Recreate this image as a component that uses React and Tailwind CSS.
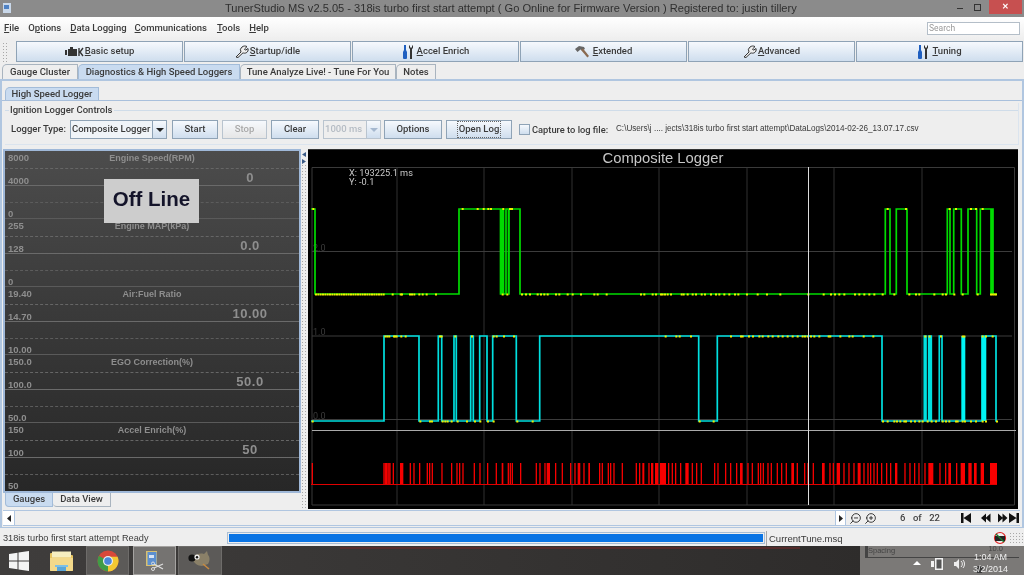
import React from 'react';
import { ZoomIn, ZoomOut } from 'lucide-react';

const range = (a, b, s) => {
  const out = [];
  for (let i = a; i < b; i += s) out.push(i);
  return out;
};
const fromA = (p) => 305 + p / 3;
const fromB = (p) => 660 + p / 3;

// values below were read off the trace, in page pixels
const GREEN_HIGH = 209;
const GREEN_LOW = 294;
const greenEdges = [315, 459, 500.5, 502, 503.5, 506, 508.5, 509, 520, 885.3, 890, 896.3, 907, 947.3, 950, 953.7, 961.3, 968, 976.7, 980.3, 991, 992, 993, 997];
const CYAN_HIGH = 336;
const CYAN_LOW = 421;
const cyanEdges = [384, 419, 438.3, 441.7, 454, 456.3, 470.7, 473.3, 479.7, 487, 492.7, 516.3, 539.7, 698.7, 717.3, 882, 924.3, 926, 928.7, 929.5, 930, 931.3, 939.3, 942, 982, 996, 997];

const greenLowDots = [
  ...range(30, 240, 7), 260, 284, 288, 312, 318, 325, 340, 350, 362, 390, 590, 604, 648, 660, 672, 695, 705, 715, 725, 750, 760, 785, 800, 825, 865, 875, 902, 1005, 1015, 1040, 1050, 1065,
].map(fromA).concat(
  [5, 12, 20, 30, 62, 68, 80, 95, 105, 122, 132, 150, 165, 175, 190, 205, 222, 232, 258, 290, 318, 358, 442, 488, 510, 522, 535, 550, 582, 595, 610, 625, 640, 665, 700, 745, 765, 775, 820, 845, 855, 880, 905, 950, 990, 995, 1000, 1005].map(fromB)
);
const greenHighDots = [22, 470, 515, 533, 547, 555, 592, 612, 618].map(fromA).concat([680, 735, 866, 885, 930, 945, 965].map(fromB));
const cyanHighDots = [238, 244, 250, 264, 268, 272, 286, 299, 402, 407, 448, 498, 563, 572, 594, 624].map(fromA).concat(
  [14, 46, 56, 90, 210, 240, 245, 264, 276, 295, 305, 322, 335, 352, 365, 380, 395, 410, 425, 432, 440, 450, 460, 475, 503, 508, 538, 565, 575, 608, 637, 793, 806, 840, 905, 910, 965, 975, 995].map(fromB)
);
const cyanLowDots = [20, 343, 372, 378, 410, 418, 425, 437, 455, 483, 507, 523, 546, 563, 634, 680].map(fromA).concat(
  [116, 158, 666, 680, 700, 708, 718, 730, 735, 750, 762, 775, 785, 800, 812, 825, 845, 855, 865, 885, 890, 905, 912, 930, 945, 965, 975, 1008].map(fromB)
);

const redA = [20, 235, 239, 243, 247, 250, 253, 263, [285, 295], 314, 325, [342, 346], 365, 372, 380, 409, 438, 454, 462, 472, 506, 523, 546, 572, [590, 595], 608, 614, 620, 645, 692, 703, 718, [725, 735], 750, 770, 795, 808, 818, 822, 835, [850, 855], 882, 890, 908, 915, 925, 950, 992, 1002, [1012, 1018], 1030, [1038, 1045], [1050, 1060], [1065, 1078]];
const redB = [[3, 18], 24, 35, 45, 60, [76, 86], 95, 108, 122, 162, 172, 195, 210, 228, [240, 248], 262, 275, 293, 300, 308, 322, 332, 350, 363, 377, [394, 402], 410, 432, 442, 458, [486, 494], 508, 518, [530, 540], 550, 565, 580, [593, 602], 610, 622, 630, 640, 650, 663, 678, 690, [705, 712], 733, 748, 762, 775, 793, [805, 820], 838, 855, [865, 873], 888, [902, 915], [925, 935], [942, 950], [962, 972], [990, 1011]];

const stepPath = (edges, first, second, startX) => {
  let level = first;
  let d = `M${startX} ${first}`;
  edges.forEach((x, i) => {
    d += `H${x}`;
    if (i < edges.length - 1) {
      level = level === first ? second : first;
      d += `V${level}`;
    }
  });
  return d;
};

function Spikes({ items, map }) {
  return items.map((s, i) => {
    const a = map(Array.isArray(s) ? s[0] : s);
    const b = Array.isArray(s) ? map(s[1]) : a + 1.3;
    return <rect key={i} x={a} y={463} width={b - a} height={21.5} fill="#f80000" />;
  });
}

function Dots({ xs, y, w = 2 }) {
  return xs.map((x, i) => <rect key={i} x={x} y={y} width={w} height={2} fill="#f0f000" />);
}

function LoggerChart() {
  const vLines = [397, 484, 572, 659, 747, 834, 922];
  return (
    <svg width="710" height="342" viewBox="308 167 710 342" className="block">
      {vLines.map((x) => (
        <line key={x} x1={x} x2={x} y1={167} y2={505} stroke="#303030" />
      ))}
      <path d="M312 505V167.500H1014.500V505H312" fill="none" stroke="#3a3a3a" />
      <line x1={312} x2={1012} y1={251.5} y2={251.5} stroke="#3c3c3c" />
      <line x1={312} x2={1012} y1={336} y2={336} stroke="#3c3c3c" />
      <line x1={312} x2={1012} y1={419.5} y2={419.5} stroke="#3c3c3c" />
      <text x={313} y={251} fontSize="9" fill="#3a3a3a">2.0</text>
      <text x={313} y={335} fontSize="9" fill="#3a3a3a">1.0</text>
      <text x={313} y={419} fontSize="9" fill="#3a3a3a">0.0</text>
      <text x={349} y={176} fontSize="9.2" fill="#c8c8c8">X: 193225.1 ms</text>
      <text x={349} y={185} fontSize="9.2" fill="#c8c8c8">Y: -0.1</text>

      <path d={stepPath(greenEdges, GREEN_HIGH, GREEN_LOW, 311)} fill="none" stroke="#00dc00" strokeWidth="1.7" />
      <Dots xs={greenLowDots} y={293.5} />
      <Dots xs={greenHighDots} y={208} />

      <path d={stepPath(cyanEdges, CYAN_LOW, CYAN_HIGH, 311)} fill="none" stroke="#00e0e0" strokeWidth="1.7" />
      <rect x={961.3} y={336} width={4} height={85} fill="#00f4f4" />
      <rect x={981.7} y={336} width={4.6} height={85} fill="#00f4f4" />
      <Dots xs={cyanHighDots} y={335.5} />
      <Dots xs={cyanLowDots} y={420.5} />

      <line x1={312} x2={1016} y1={430.5} y2={430.5} stroke="#aaaaaa" />
      <Spikes items={redA} map={fromA} />
      <Spikes items={redB} map={fromB} />
      <rect x={311} y={484} width={686} height={1} fill="#e00000" />
      <line x1={808.5} x2={808.5} y1={167} y2={505} stroke="#dcdcdc" />
    </svg>
  );
}

function Gauge({ title, top, mid, bottom, value, last }) {
  return (
    <div className="grid grid-cols-[98px_98px_98px] grid-rows-[18px_17px_17px_16px] h-[68px] text-[#8e8e8e]">
      <div className="col-span-3 row-start-1 col-start-1 border-b border-dashed border-[#666]" />
      <div className="col-span-3 row-start-2 col-start-1 border-b border-[#6a6a6a]" />
      <div className="col-span-3 row-start-3 col-start-1 border-b border-dashed border-[#5c5c5c]" />
      <div className={`col-span-3 row-start-4 col-start-1 ${last ? '' : 'border-b border-[#5a5a5a]'}`} />
      <div className="col-start-1 row-start-1 row-span-4 pl-[3px] text-[9.5px] font-bold leading-[12px] font-['Liberation_Sans',sans-serif]">
        <div className="h-[12px] mt-px">{top}</div>
        <div className="h-[12px] mt-[11px]">{mid}</div>
        <div className="h-[12px] mt-[21px]">{bottom}</div>
      </div>
      <div className="col-start-2 row-start-1 row-span-4 text-center text-[9px] font-bold leading-[12px] whitespace-nowrap pt-px font-['Liberation_Sans',sans-serif]">{title}</div>
      <div className="col-start-3 row-start-1 row-span-4 text-center text-[13px] font-bold tracking-[0.5px] leading-[14px] pt-5 font-['Liberation_Sans',sans-serif]">{value}</div>
    </div>
  );
}

function Mn({ children }) {
  return <span className="underline underline-offset-1">{children}</span>;
}

function BtnGradient({ className = '', children }) {
  return (
    <div className={`flex items-center justify-center bg-gradient-to-b from-[#f6f9fd] to-[#cfdeee] border border-[#8fa3b6] ${className}`}>
      {children}
    </div>
  );
}

function EngineIcon() {
  return (
    <svg width="19" height="10" viewBox="0 0 19 10" className="mr-px">
      <path d="M0 3h2v5H0zM3 2h2V0h3v2h4v7H3z" fill="#333" />
      <path d="M14 1v8M18 1l-3 4 3 4" stroke="#333" strokeWidth="1.4" fill="none" />
    </svg>
  );
}

function WrenchIcon() {
  return (
    <svg width="14" height="13" viewBox="0 0 14 13" className="mr-px">
      <path d="M1 12l5-5a3.800 3.800 0 0 1 1-5c1.500-1.200 3.500-1.300 5-.4L9.500 4l1 1.200L13 3.500c.6 2-.4 3.600-1.800 4.300-1.300.6-2.400.4-3.200 0L3 12.500z" fill="#eee" stroke="#333" strokeWidth="1" />
    </svg>
  );
}

function ToolsIcon() {
  return (
    <svg width="12" height="14" viewBox="0 0 12 14" className="mr-[3px]">
      <path d="M2 0h2v5l1 2v6a1 1 0 0 1-1 1H2a1 1 0 0 1-1-1V7l1-2z" fill="#1f5fc0" />
      <path d="M7 0v3l1 1v10h2V4l1-1V0l-1 1v1.500H8V1z" fill="#333" />
    </svg>
  );
}

function HammerIcon() {
  return (
    <svg width="15" height="12" viewBox="0 0 15 12" className="mr-[3px]">
      <path d="M0 3l4-3 5 1 1 2-3 1.500-1.500-1-3 2.500z" fill="#666" />
      <path d="M6 4l2-1.500 6 7.500-1.600 1.500z" fill="#8a6a50" />
    </svg>
  );
}

function ToolButton({ children, icon, className = '' }) {
  return (
    <BtnGradient className={`w-[167px] h-[21px] text-[9.5px] font-medium text-[#3a3a3a] ${className}`}>
      {icon}
      <span>{children}</span>
    </BtnGradient>
  );
}

function Tab({ children, active, className = '' }) {
  return (
    <div className={`flex items-center justify-center h-full border border-b-0 rounded-tl-[5px] text-[9.5px] font-medium whitespace-nowrap text-[#3a3a3a] ${active ? 'bg-[#c9dbf0] border-[#a3bcd9]' : 'bg-[#eeeeee] border-[#a9b4bf]'} ${className}`}>
      {children}
    </div>
  );
}

function Grip({ className = '' }) {
  return <div className={`bg-[radial-gradient(#a8a8a8_0.7px,transparent_0.8px)] bg-[length:3px_3px] ${className}`} />;
}

function Combo({ label, disabled, className = '' }) {
  return (
    <div className={`flex h-[19px] border ${disabled ? 'border-[#b9c4cf]' : 'border-[#8fa3b6]'} ${className}`}>
      <div className={`flex-1 flex items-center pl-px text-[9.5px] font-medium whitespace-nowrap ${disabled ? 'text-[#b5bcc4]' : 'text-[#3a3a3a] bg-[#f0f4f8]'}`}>{label}</div>
      <div className={`w-[14px] flex items-center justify-center border-l bg-gradient-to-b from-[#f6f9fd] to-[#cfdeee] ${disabled ? 'border-[#b9c4cf]' : 'border-[#8fa3b6]'}`}>
        <svg width="8" height="4" viewBox="0 0 8 4"><path d="M0 0h8L4 4z" fill={disabled ? '#a5b8cf' : '#222'} /></svg>
      </div>
    </div>
  );
}

function FolderIcon() {
  return (
    <svg width="25" height="22" viewBox="0 0 25 22">
      <path d="M1 4a1 1 0 0 1 1-1h6l2 2h13a1 1 0 0 1 1 1v14a1 1 0 0 1-1 1H2a1 1 0 0 1-1-1z" fill="#e8c560" />
      <rect x="3" y="1.500" width="19" height="6" fill="#f6eec0" />
      <path d="M1 8h23v12a1 1 0 0 1-1 1H2a1 1 0 0 1-1-1z" fill="#f3d98a" />
      <path d="M8 21v-4h9v4" fill="#5aa6d8" />
      <rect x="6" y="15" width="13" height="2" fill="#7cc0e8" />
    </svg>
  );
}

function ChromeIcon() {
  return (
    <svg width="22" height="22" viewBox="0 0 22 22">
      <circle cx="11" cy="11" r="10.500" fill="#d8483a" />
      <path d="M11 11L1.900 5.800A10.500 10.500 0 0 0 11 21.500z" fill="#3f9c46" />
      <path d="M11 11v10.500A10.500 10.500 0 0 0 20.600 6.700H11z" fill="#f2c832" />
      <circle cx="11" cy="11" r="5" fill="#eee" />
      <circle cx="11" cy="11" r="3.800" fill="#4a86d8" />
    </svg>
  );
}

function TunerIcon() {
  return (
    <svg width="18" height="22" viewBox="0 0 18 22">
      <rect x="0" y="1" width="11" height="15" fill="#d8c070" />
      <rect x="1.500" y="2" width="9" height="13" fill="#5c8fd0" />
      <rect x="3" y="5" width="5" height="3" fill="#d8e4f4" />
      <path d="M8 18l9-4M8 14l9 5" stroke="#ddd" strokeWidth="1.3" fill="none" />
      <circle cx="7" cy="19" r="1.500" fill="none" stroke="#ddd" />
      <circle cx="7" cy="13.500" r="1.500" fill="none" stroke="#ddd" />
    </svg>
  );
}

function GimpIcon() {
  return (
    <svg width="26" height="20" viewBox="0 0 26 20">
      <path d="M6 5c4-2 7-3 11-2l3-3 1 4c2 2 2 6 0 9l-6 2c-4 0-8-3-9-6z" fill="#8a8068" />
      <circle cx="5" cy="7" r="3.600" fill="#111" />
      <circle cx="10" cy="6" r="2.600" fill="#eee" />
      <circle cx="10" cy="6.300" r="1.200" fill="#111" />
      <path d="M16 13l6 5" stroke="#c88a40" strokeWidth="1.600" />
    </svg>
  );
}

function NavIcons() {
  return (
    <svg width="58" height="12" viewBox="0 0 58 12" className="ml-[21px]">
      <path d="M0 1h2.500v10H0zM10 1v10L2.500 6z" fill="#111" />
      <path d="M20 6l5-4.500v9zM24.500 6l5-4.500v9z" fill="#111" />
      <path d="M37 1.500v9l5-4.500zM41.500 1.500v9l5-4.500z" fill="#111" />
      <path d="M48 1v10l7.500-5zM55.500 1H58v10h-2.500z" fill="#111" />
    </svg>
  );
}

export default function App() {
  const gauges = [
    { title: 'Engine Speed(RPM)', top: '8000', mid: '4000', bottom: '0', value: '0' },
    { title: 'Engine MAP(kPa)', top: '255', mid: '128', bottom: '0', value: '0.0' },
    { title: 'Air:Fuel Ratio', top: '19.40', mid: '14.70', bottom: '10.00', value: '10.00' },
    { title: 'EGO Correction(%)', top: '150.0', mid: '100.0', bottom: '50.0', value: '50.0' },
    { title: 'Accel Enrich(%)', top: '150', mid: '100', bottom: '50', value: '50', last: true },
  ];

  return (
    <div className="w-[1024px] h-[575px] overflow-hidden flex flex-col bg-[#eeeeee] font-['Roboto',sans-serif] text-[#3a3a3a] blur-[0.3px]">
      {/* title bar */}
      <div className="h-[17px] flex items-start bg-[#8b8b8b] text-[#2f2f2f] font-['Liberation_Sans',sans-serif]">
        <svg width="12" height="12" viewBox="0 0 12 12" className="ml-[2px] mt-[2px]">
          <rect x="1" y="1" width="8" height="10" fill="#c9d8ea" />
          <rect x="2" y="3" width="5" height="4" fill="#4f82c4" />
        </svg>
        <div className="ml-[211px] w-[574px] text-[11.1px] leading-[17px] whitespace-nowrap">
          TunerStudio MS v2.5.05 - 318is turbo first start attempt ( Go Online for Firmware Version ) Registered to: justin tillery
        </div>
        <div className="ml-auto flex items-center h-[14px]">
          <span className="w-[6px] h-px bg-[#333] mt-[3px] mr-[11px]" />
          <span className="w-[7px] h-[7px] border border-[#333] mr-[8px]" />
          <div className="w-[33px] h-full bg-[#c75050] flex items-center justify-center text-white text-[8px] font-bold mr-[2px]">✕</div>
        </div>
      </div>

      {/* menu */}
      <div className="h-[23px] flex items-center bg-gradient-to-b from-[#ffffff] to-[#eeeeee] text-[9.5px] font-medium">
        <span className="ml-[4px]"><Mn>F</Mn>ile</span>
        <span className="ml-[9px]">O<Mn>p</Mn>tions</span>
        <span className="ml-[9px]"><Mn>D</Mn>ata Logging</span>
        <span className="ml-[8px]"><Mn>C</Mn>ommunications</span>
        <span className="ml-[10px]"><Mn>T</Mn>ools</span>
        <span className="ml-[9px]"><Mn>H</Mn>elp</span>
        <div className="ml-auto mr-[4px] w-[93px] h-[13px] bg-white border border-[#b4bec8] text-[8.5px] leading-[11px] text-[#9a9a9a] pl-px font-normal">Search</div>
      </div>

      {/* toolbar */}
      <div className="h-[22px] flex items-center pt-px">
        <Grip className="w-[7px] h-[20px] ml-[2px] mr-[7px]" />
        <div className="flex gap-px">
          <ToolButton icon={<EngineIcon />}><Mn>B</Mn>asic setup</ToolButton>
          <ToolButton icon={<WrenchIcon />}><Mn>S</Mn>tartup/idle</ToolButton>
          <ToolButton icon={<ToolsIcon />}><Mn>A</Mn>ccel Enrich</ToolButton>
          <ToolButton icon={<HammerIcon />}><Mn>E</Mn>xtended</ToolButton>
          <ToolButton icon={<WrenchIcon />}><Mn>A</Mn>dvanced</ToolButton>
          <ToolButton icon={<ToolsIcon />}><Mn>T</Mn>uning</ToolButton>
        </div>
      </div>

      {/* main tabs */}
      <div className="h-[17px] flex pl-[2px] pt-[2px]">
        <Tab className="w-[76px]">Gauge Cluster</Tab>
        <Tab active className="w-[162px]">Diagnostics &amp; High Speed Loggers</Tab>
        <Tab className="w-[156px]">Tune Analyze Live! - Tune For You</Tab>
        <Tab className="w-[40px]">Notes</Tab>
      </div>

      {/* tab body */}
      <div className="h-[448px] border-2 border-b-0 border-[#b0c6e0] flex flex-col">
        <div className="h-[20px] pt-[6px] pl-[3px] border-b border-[#a9c0dc] shrink-0">
          <Tab active className="w-[94px]">High Speed Logger</Tab>
        </div>

        {/* logger controls */}
        <div className="h-[42px] ml-[3px] mr-[3px] mt-[2px] border-b border-r border-[#dbe4ee] shrink-0">
          <div className="flex items-center h-[12px] mt-px">
            <span className="w-[4px] border-t border-[#cfdce9]" />
            <span className="text-[9.5px] font-medium px-px">Ignition Logger Controls</span>
            <span className="flex-1 border-t border-[#cfdce9]" />
          </div>
          <div className="flex items-center h-[19px] mt-[4px] text-[9.5px] font-medium">
            <span className="ml-[6px] w-[54px] whitespace-nowrap">Logger Type:</span>
            <Combo label="Composite Logger" className="ml-[5px] w-[97px]" />
            <BtnGradient className="ml-[5px] w-[46px] h-[19px]">Start</BtnGradient>
            <BtnGradient className="ml-[4px] w-[45px] h-[19px] text-[#a8a8a8] from-[#f2f2f2] to-[#e6e6e6] border-[#b9c4cf]">Stop</BtnGradient>
            <BtnGradient className="ml-[4px] w-[48px] h-[19px]">Clear</BtnGradient>
            <Combo label="1000 ms" disabled className="ml-[4px] w-[58px]" />
            <BtnGradient className="ml-[3px] w-[58px] h-[19px]">Options</BtnGradient>
            <BtnGradient className="ml-[4px] w-[66px] h-[19px]">
              <span className="outline-1 outline-dotted outline-[#666] px-px">Open Log</span>
            </BtnGradient>
            <span className="ml-[7px] w-[11px] h-[11px] border border-[#8fa3b6] bg-gradient-to-b from-[#f6f9fd] to-[#cfdeee]" />
            <span className="ml-[2px] whitespace-nowrap w-[76px] text-[9.3px]">Capture to log file:</span>
            <span className="ml-[8px] text-[8.15px] font-normal whitespace-nowrap font-['Liberation_Sans',sans-serif]">C:\Users\j .... jects\318is turbo first start attempt\DataLogs\2014-02-26_13.07.17.csv</span>
          </div>
        </div>

        {/* gauges + chart */}
        <div className="h-[360px] mt-[4px] ml-px flex shrink-0">
          <div className="w-[298px] flex flex-col">
            <div className="relative h-[344px] border-2 border-[#9fb8d8] bg-gradient-to-b from-[#4c4c4c] to-[#272727]">
              {gauges.map((g) => (
                <Gauge key={g.title} {...g} />
              ))}
              <div className="absolute left-[99px] top-[28px] w-[95px] h-[44px] pb-[3px] bg-[#cdcdcd] flex items-center justify-center text-[20.5px] font-bold text-[#14142a] font-['Liberation_Sans',sans-serif]">Off Line</div>
            </div>
            <div className="h-[14px] flex pl-[2px]">
              <div className="w-[48px] flex items-center justify-center bg-[#c9dbf0] border border-t-0 border-[#a3bcd9] rounded-bl-[4px] text-[9.5px] font-medium">Gauges</div>
              <div className="w-[58px] flex items-center justify-center border border-t-0 border-l-0 border-[#a9b4bf] rounded-bl-[4px] text-[9.5px] font-medium">Data View</div>
            </div>
          </div>
          <div className="w-[7px] flex flex-col items-center">
            <svg width="5" height="12" viewBox="0 0 5 12" className="mt-[3px]"><path d="M4 0v5L0 2.500zM0 7v5l4-2.500z" fill="#3a5a86" /></svg>
            <Grip className="w-full flex-1" />
          </div>
          <div className="w-[710px] bg-black flex flex-col border-t border-[#333]">
            <div className="h-[17px] text-center text-[14.8px] leading-[17px] text-[#c8c8c8] font-['Liberation_Sans',sans-serif]">Composite Logger</div>
            <LoggerChart />
          </div>
        </div>

        {/* scroll + paging row */}
        <div className="h-[16px] mt-px ml-px mr-[2px] flex items-center border-y border-[#b0c6e0] shrink-0">
          <div className="w-[12px] h-full flex items-center justify-center bg-white border-r border-[#b0c6e0]">
            <svg width="4" height="7" viewBox="0 0 4 7"><path d="M4 0v7L0 3.500z" fill="#222" /></svg>
          </div>
          <div className="w-[820px] h-full" />
          <div className="w-[11px] h-full flex items-center justify-center bg-white border-x border-[#b0c6e0]">
            <svg width="4" height="7" viewBox="0 0 4 7"><path d="M0 0v7l4-3.500z" fill="#222" /></svg>
          </div>
          <ZoomOut size={13} strokeWidth={1.6} className="ml-[3px] text-[#222] -scale-x-100" />
          <ZoomIn size={13} strokeWidth={1.6} className="ml-[2px] text-[#222] -scale-x-100" />
          <span className="ml-[23px] w-[40px] text-[9.5px] font-medium flex justify-between text-[#444]"><span>6</span><span>of</span><span>22</span></span>
          <NavIcons />
        </div>
      </div>

      {/* status bar */}
      <div className="h-[19px] pt-[3px] flex bg-[#eeeeee] text-[9.5px] border-t border-[#b0c6e0] shrink-0 leading-[15px] font-['Liberation_Sans',sans-serif]">
        <div className="w-[226px] pl-[3px] whitespace-nowrap text-[9.2px]">318is turbo first start attempt Ready</div>
        <div className="ml-px w-[538px] h-[12px] mt-px border border-[#a8bdd4] p-px"><div className="h-full bg-[#0a74e4]" /></div>
        <div className="w-[225px] pl-[2px] border-l border-[#a8a8a8] ml-px">CurrentTune.msq</div>
        <svg width="14" height="14" viewBox="0 0 14 14" className="ml-[2px]">
          <circle cx="7" cy="7" r="5.500" fill="none" stroke="#e02020" strokeWidth="1.2" />
          <path d="M2 5h10v5H2z" fill="#222" />
          <path d="M3 3l8 8" stroke="#1a7a30" strokeWidth="1.4" />
        </svg>
        <Grip className="w-[15px] h-[13px] ml-auto mt-px" />
      </div>

      {/* windows taskbar */}
      <div className="h-[29px] relative flex items-stretch bg-gradient-to-r from-[#3f3d3c] to-[#2b2928] shrink-0">
        <div className="absolute left-[340px] top-px w-[460px] h-[2px] bg-[#6e2a2a] opacity-60" />
        <div className="w-[38px] flex items-center justify-center">
          <svg width="20" height="20" viewBox="0 0 20 20"><path d="M0 3l8.500-1.200v7.700H0zM9.500 1.600L20 0v9.500H9.500zM0 10.500h8.500v7.700L0 17zM9.500 10.500H20V20L9.500 18.400z" fill="#f4f4f4" /></svg>
        </div>
        <div className="w-[47px] flex items-center justify-center"><FolderIcon /></div>
        <div className="w-[43px] flex items-center justify-center bg-[#5c5a58] border border-[#6e6c6a] ml-px"><ChromeIcon /></div>
        <div className="w-[43px] flex items-center justify-center bg-[#757371] border border-[#a5a3a1] ml-[4px]"><TunerIcon /></div>
        <div className="w-[44px] flex items-center justify-center bg-[#5c5a58] border border-[#6e6c6a] ml-[2px]"><GimpIcon /></div>
        <div className="ml-auto w-[164px] bg-[#7b7977] flex flex-col text-white font-['Liberation_Sans',sans-serif]">
          <div className="h-[12px] mx-[5px] flex justify-between items-start border-b border-l-[3px] border-[#444] text-[7.5px] leading-[6px] text-[#444]">
            <span className="mt-[2px]">Spacing</span>
            <span className="mr-[16px]">10.0</span>
          </div>
          <div className="flex items-center h-[17px] pl-[53px] gap-[10px]">
            <span className="w-0 h-0 border-x-[4px] border-x-transparent border-b-[4px] border-b-white -mt-[8px]" />
            <svg width="13" height="12" viewBox="0 0 13 12" className="-mt-[6px]"><path d="M0 3h3v6H0zM4 0h8v12H4z" fill="#f2f2f2" /><rect x="5.500" y="1.500" width="5" height="9" fill="#555" /></svg>
            <svg width="11" height="10" viewBox="0 0 11 10" className="-mt-[6px]"><path d="M0 3h2l3-3v10L2 7H0z" fill="#eee" /><path d="M7 2a4 4 0 0 1 0 6M9 1a6 6 0 0 1 0 8" stroke="#eee" fill="none" /></svg>
            <svg width="9" height="9" viewBox="0 0 9 9" className="mt-[3px]"><path d="M1 2h7l-1 7H2z" fill="#3a3a3a" /></svg>
          </div>
          <div className="absolute right-[16px] top-[6px] text-[9px] leading-[11.500px] text-center text-[#f0f0f0]">
            <div>1:04 AM</div>
            <div>3/2/2014</div>
          </div>
        </div>
      </div>
    </div>
  );
}
